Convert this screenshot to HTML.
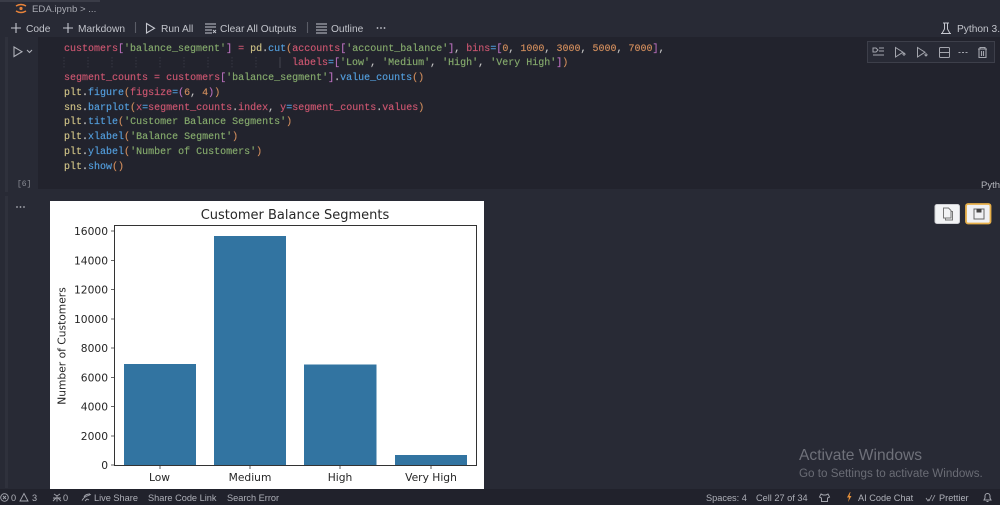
<!DOCTYPE html>
<html><head><meta charset="utf-8"><style>
html,body{margin:0;padding:0;width:1000px;height:505px;overflow:hidden;background:#282a35}
body{font-family:"Liberation Sans",sans-serif;color:#c5c7cf}
#w{position:absolute;left:0;top:0;width:1000px;height:505px;overflow:hidden;filter:blur(.3px)}
.a{position:absolute;white-space:pre}
.tb{font-size:10.2px;color:#c2c4cb;top:23px;line-height:13px}
.code{font-family:"Liberation Mono",monospace;font-size:10px;line-height:15px;left:64px;color:#f8f8f2;-webkit-text-stroke:.15px currentColor}
.r{color:#cc5670}.g{color:#85aa6c}.b{color:#539edd}.y{color:#cdc085}.o{color:#cf8c5c}.p{color:#b96fbc}.w{color:#c4c4c4}
.sb{font-size:9.2px;color:#aeb0b8;top:492px;line-height:12px}
svg{position:absolute;left:0;top:0}
</style></head><body><div id="w">
<div class="a" style="left:0;top:0;width:1000px;height:18px;background:#282a35"></div>
<div class="a" style="left:0;top:0;width:100px;height:2px;background:#3a3c47"></div>
<div class="a" style="left:38px;top:37px;width:962px;height:152px;background:#22232d"></div>
<div class="a" style="left:5px;top:37px;width:3px;height:155px;background:#2f313c"></div>
<div class="a" style="left:5px;top:196px;width:3px;height:292px;background:#2f313c"></div>
<div class="a" style="left:0;top:489px;width:1000px;height:16px;background:#21222c"></div>

<div class="a" style="left:32px;top:4px;font-size:9.6px;line-height:12px;color:#a9abb3">EDA.ipynb &gt; ...</div>
<div class="a tb" style="left:26px">Code</div>
<div class="a tb" style="left:78px">Markdown</div>
<div class="a tb" style="left:161px">Run All</div>
<div class="a tb" style="left:220px">Clear All Outputs</div>
<div class="a tb" style="left:331px">Outline</div>
<div class="a tb" style="left:957px">Python 3.</div>

<div class="a code" style="top:41.500px"><span class="r">customers</span><span class="p">[</span><span class="g">'balance_segment'</span><span class="p">]</span> <span class="r">=</span> <span class="y">pd</span><span class="w">.</span><span class="b">cut</span><span class="o">(</span><span class="r">accounts</span><span class="p">[</span><span class="g">'account_balance'</span><span class="p">]</span><span class="w">,</span> <span class="r">bins</span><span class="b">=</span><span class="p">[</span><span class="o">0</span><span class="w">,</span> <span class="o">1000</span><span class="w">,</span> <span class="o">3000</span><span class="w">,</span> <span class="o">5000</span><span class="w">,</span> <span class="o">7000</span><span class="p">]</span><span class="w">,</span></div>
<div class="a code" style="top:56px;left:292px"><span class="r">labels</span><span class="b">=</span><span class="p">[</span><span class="g">'Low'</span><span class="w">,</span> <span class="g">'Medium'</span><span class="w">,</span> <span class="g">'High'</span><span class="w">,</span> <span class="g">'Very High'</span><span class="p">]</span><span class="o">)</span></div>
<div class="a code" style="top:71px"><span class="r">segment_counts</span> <span class="r">=</span> <span class="r">customers</span><span class="p">[</span><span class="g">'balance_segment'</span><span class="p">]</span><span class="w">.</span><span class="b">value_counts</span><span class="o">()</span></div>
<div class="a code" style="top:86px"><span class="y">plt</span><span class="w">.</span><span class="b">figure</span><span class="o">(</span><span class="r">figsize</span><span class="b">=</span><span class="p">(</span><span class="o">6</span><span class="w">,</span> <span class="o">4</span><span class="p">)</span><span class="o">)</span></div>
<div class="a code" style="top:101px"><span class="y">sns</span><span class="w">.</span><span class="b">barplot</span><span class="o">(</span><span class="r">x</span><span class="b">=</span><span class="r">segment_counts</span><span class="w">.</span><span class="r">index</span><span class="w">,</span> <span class="r">y</span><span class="b">=</span><span class="r">segment_counts</span><span class="w">.</span><span class="r">values</span><span class="o">)</span></div>
<div class="a code" style="top:115px"><span class="y">plt</span><span class="w">.</span><span class="b">title</span><span class="o">(</span><span class="g">'Customer Balance Segments'</span><span class="o">)</span></div>
<div class="a code" style="top:130px"><span class="y">plt</span><span class="w">.</span><span class="b">xlabel</span><span class="o">(</span><span class="g">'Balance Segment'</span><span class="o">)</span></div>
<div class="a code" style="top:145px"><span class="y">plt</span><span class="w">.</span><span class="b">ylabel</span><span class="o">(</span><span class="g">'Number of Customers'</span><span class="o">)</span></div>
<div class="a code" style="top:160px"><span class="y">plt</span><span class="w">.</span><span class="b">show</span><span class="o">()</span></div>

<div class="a" style="left:17px;top:180px;font-family:'Liberation Mono',monospace;font-size:8px;line-height:10px;color:#8b8d96">[6]</div>
<div class="a" style="left:981px;top:180px;font-size:9.5px;line-height:12px;color:#b4b6bd">Pyth</div>

<div class="a" style="left:799px;top:446.500px;font-size:15.600px;line-height:17px;color:#6f717a">Activate Windows</div>
<div class="a" style="left:799px;top:467px;font-size:11.650px;line-height:13px;color:#6a6c75">Go to Settings to activate Windows.</div>

<div class="a sb" style="left:11px">0</div>
<div class="a sb" style="left:32px">3</div>
<div class="a sb" style="left:63px">0</div>
<div class="a sb" style="left:94px">Live Share</div>
<div class="a sb" style="left:148px">Share Code Link</div>
<div class="a sb" style="left:227px">Search Error</div>
<div class="a sb" style="left:706px">Spaces: 4</div>
<div class="a sb" style="left:756px">Cell 27 of 34</div>
<div class="a sb" style="left:858px">AI Code Chat</div>
<div class="a sb" style="left:939px">Prettier</div>

<svg width="1000" height="505" viewBox="0 0 1000 505" fill="none">
 <!-- logo -->
 <g stroke="#e8833a" stroke-width="1.500"><path d="M16 6q5-3 10 0M16 11q5 3 10 0"/></g><circle cx="21" cy="8.500" r="1.600" fill="#e8833a"/>
 <!-- indent guides -->
 <path d="M64 57v11M88 57v11M112 57v11M136 57v11M160 57v11M184 57v11M208 57v11M232 57v11M256 57v11" stroke="#353742" stroke-width="1" stroke-dasharray="1.500 1.500"/>
 <path d="M280 57v11" stroke="#44464f" stroke-width="1"/>
 <!-- toolbar -->
 <g stroke="#c5c7cf" stroke-width="1.100">
  <path d="M11 28h10M16 23v10M63 28h10M68 23v10"/>
  <path d="M135.500 22v11M307.500 22v11" stroke="#5b5d67"/>
  <path d="M146.500 23.500v9.500l8-4.700z"/>
  <path d="M205 24h11M205 27h11M205 30h7M205 33h7M213 30l3 3M216 30l-3 3" stroke-width=".9"/>
  <path d="M316 24h11M316 27h11M316 30h11M316 33h11" stroke-width=".9"/>
  <path d="M943 23h6M944.500 23v6l-2.500 4.500h8l-2.500-4.500v-6M941 33.500h10" stroke-width="1"/>
  <path d="M14 47v9.500l8-4.800z" stroke="#aeb0b8"/>
  <path d="M27 50l2.500 2.500 2.500-2.500" stroke="#aeb0b8"/>
 </g>
 <g fill="#c5c7cf"><circle cx="377.500" cy="28" r=".9"/><circle cx="381" cy="28" r=".9"/><circle cx="384.500" cy="28" r=".9"/></g>
 <g fill="#a9abb3"><circle cx="17" cy="207" r=".9"/><circle cx="20.500" cy="207" r=".9"/><circle cx="24" cy="207" r=".9"/></g>
 <!-- cell toolbar -->
 <rect x="867.500" y="41.500" width="127" height="21" fill="#282a35" stroke="#3d3f4a"/>
 <g stroke="#a4a6ae" stroke-width="1">
  <path d="M873 48h3l2 2-2 2h-3zM879 48h5M879 51h5M873 55h11"/>
  <path d="M895.500 47.500v9.500l7.500-4.800zM904 56v-3M902.500 54.500l1.500-1.500 1.500 1.500"/>
  <path d="M917.500 47.500v9.500l7.500-4.800zM926 53v3M924.500 54.500l1.500 1.500 1.500-1.500"/>
  <rect x="939.500" y="47.500" width="10" height="10" rx="1"/><path d="M939.500 52.500h10"/>
  <path d="M958.500 52.500h2M962 52.500h2M965.500 52.500h2"/>
  <path d="M978 49h9M980 49v-1.500h5v1.500M979 49.500v8h7v-8M981.500 51v5M983.500 51v5" stroke-width="1.100"/>
 </g>
 <!-- output buttons -->
 <rect x="935" y="204.500" width="24.500" height="19" rx="2" fill="#f2f3f5" stroke="#cfd0d4"/>
 <path d="M943.500 208h5l2.500 2.500v7.500h-7.500zM945.500 218.500v1.500h7v-8.500h-2" stroke="#777" stroke-width="1" fill="none"/>
 <rect x="966" y="204" width="24.500" height="19.500" rx="2" fill="#f0f1f4" stroke="#e8b04a" stroke-width="1.800"/>
 <path d="M974 209h10v10h-10z" stroke="#666" stroke-width="1"/><path d="M976.500 209h5v3.500h-5z" fill="#444"/>
 <!-- status icons -->
 <g stroke="#a4a6ae" stroke-width=".9">
  <circle cx="4.500" cy="497.500" r="3.800"/><path d="M3 496l3 3M6 496l-3 3"/>
  <path d="M24 493.500l4 7.500h-8z"/>
  <path d="M54 494l3 2 3-2M57 496v5.500M53 498l8 0M53 501l3-3M61 501l-3-3"/>
  <path d="M82 500.500c2-4 6-5 9-6M84 497c1-2 3-3 6-3M85 501l2-2 2 1"/>
  <path d="M821 494l2 1h3l2-1 1.500 3-2 1v3.500h-6v-3.500l-2-1z" stroke-width="1"/>
  <path d="M926 498l2 3 1-2M929 501l3-6 M932 501l3-6" stroke-width=".8"/>
  <path d="M984 500h7l-1-2v-2a2.500 2.500 0 0 0-5 0v2zM986.500 501.500h2" stroke-width="1"/>
 </g>
 <path d="M850 492l-3 5.500h2l-1 4.500 3.500-6h-2l1-4z" fill="#e8923a"/>

 <!-- chart -->
 <rect x="50" y="201" width="434" height="288" fill="#fff"/>
 <g fill="#3274a1">
  <rect x="124" y="364" width="72" height="101"/>
  <rect x="214" y="236" width="72" height="229"/>
  <rect x="304" y="364.500" width="72.500" height="100.500"/>
  <rect x="395" y="455" width="72" height="10"/>
 </g>
 <rect x="114.500" y="225.500" width="362" height="240" stroke="#333" stroke-width="1"/>
 <g stroke="#333" stroke-width=".8">
  <path d="M111 465h3M111 436h3M111 406.500h3M111 377.500h3M111 348h3M111 319h3M111 289.500h3M111 260.500h3M111 231h3"/>
  <path d="M160 466v3M250 466v3M340 466v3M431 466v3"/>
 </g>
 <g font-family="'DejaVu Sans',sans-serif" font-size="10.700" fill="#262626" text-anchor="end">
  <text x="108" y="469">0</text><text x="108" y="440">2000</text><text x="108" y="410.500">4000</text>
  <text x="108" y="381.500">6000</text><text x="108" y="352">8000</text><text x="108" y="323">10000</text>
  <text x="108" y="293.500">12000</text><text x="108" y="264.500">14000</text><text x="108" y="235">16000</text>
 </g>
 <g font-family="'DejaVu Sans',sans-serif" font-size="10.700" fill="#262626" text-anchor="middle">
  <text x="159.500" y="481">Low</text><text x="250" y="481">Medium</text><text x="340" y="481">High</text><text x="431" y="481">Very High</text>
  <text x="295" y="219" font-size="13">Customer Balance Segments</text>
  <text transform="translate(65.500 346) rotate(-90)">Number of Customers</text>
 </g>
</svg>
</div></body></html>
